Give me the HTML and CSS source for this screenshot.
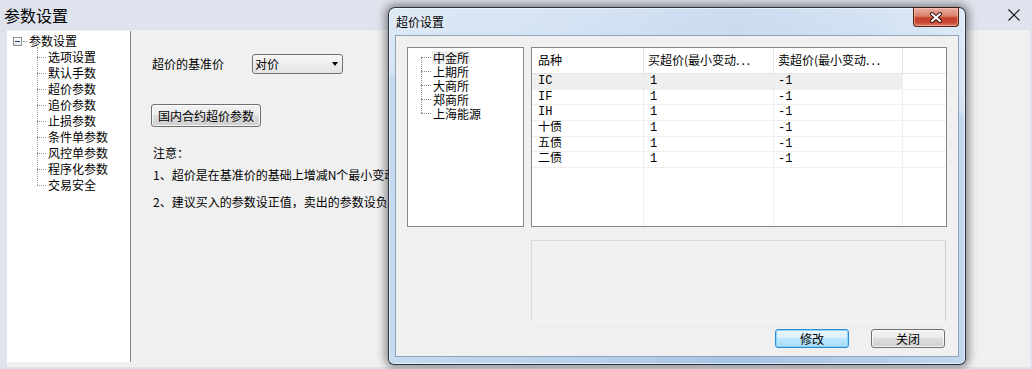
FILE: index.html
```html
<!DOCTYPE html>
<html lang="zh-CN">
<head>
<meta charset="utf-8">
<title>参数设置</title>
<link rel="stylesheet" href="styles.css">
</head>
<body>
<div class="window">
  <div class="titlebar">
    <span class="title">参数设置</span>
    <svg class="close-x" width="12" height="12" viewBox="0 0 12 12"><path d="M0.5 0.5L11.5 11.5M11.5 0.5L0.5 11.5" stroke="#111" stroke-width="1.1" fill="none"/></svg>
  </div>
  <div class="main">
    <div class="nav">
      <div class="root"><span class="expander"></span><span class="stub"></span><span class="root-label">参数设置</span></div>
      <ul class="children">
        <li>选项设置</li>
        <li>默认手数</li>
        <li>超价参数</li>
        <li>追价参数</li>
        <li>止损参数</li>
        <li>条件单参数</li>
        <li>风控单参数</li>
        <li>程序化参数</li>
        <li>交易安全</li>
      </ul>
    </div>
    <div class="content">
      <div class="field">
        <span class="label">超价的基准价</span>
        <div class="select"><span>对价</span><span class="arrow"></span></div>
      </div>
      <button class="btn" type="button">国内合约超价参数</button>
      <p class="note note-title">注意：</p>
      <p class="note note-1">1、超价是在基准价的基础上增减N个最小变动价位</p>
      <p class="note note-2">2、建议买入的参数设正值，卖出的参数设负值</p>
    </div>
  </div>

  <div class="dialog">
    <div class="dlg-titlebar">
      <span class="dlg-title">超价设置</span>
      <div class="dlg-close">
        <svg width="16" height="11" viewBox="0 0 16 11"><path d="M4 2L12 9M12 2L4 9" stroke="#3a1610" stroke-width="4" stroke-linecap="round" fill="none"/><path d="M4 2L12 9M12 2L4 9" stroke="#fff" stroke-width="2" stroke-linecap="round" fill="none"/></svg>
      </div>
    </div>
    <div class="client">
      <div class="top-row">
        <div class="exch">
          <ul>
            <li><span class="sel">中金所</span></li>
            <li><span>上期所</span></li>
            <li><span>大商所</span></li>
            <li><span>郑商所</span></li>
            <li><span>上海能源</span></li>
          </ul>
        </div>
        <div class="list">
          <div class="row head">
            <div class="cell">品种</div>
            <div class="cell">买超价(最小变动<span class="dots">...</span></div>
            <div class="cell">卖超价(最小变动<span class="dots">...</span></div>
            <div class="cell"></div>
          </div>
          <div class="row body selected">
            <div class="cell">IC</div><div class="cell">1</div><div class="cell">-1</div><div class="cell"></div>
          </div>
          <div class="row body">
            <div class="cell">IF</div><div class="cell">1</div><div class="cell">-1</div><div class="cell"></div>
          </div>
          <div class="row body">
            <div class="cell">IH</div><div class="cell">1</div><div class="cell">-1</div><div class="cell"></div>
          </div>
          <div class="row body">
            <div class="cell">十债</div><div class="cell">1</div><div class="cell">-1</div><div class="cell"></div>
          </div>
          <div class="row body">
            <div class="cell">五债</div><div class="cell">1</div><div class="cell">-1</div><div class="cell"></div>
          </div>
          <div class="row body">
            <div class="cell">二债</div><div class="cell">1</div><div class="cell">-1</div><div class="cell"></div>
          </div>
          <div class="row filler">
            <div class="cell"></div><div class="cell"></div><div class="cell"></div><div class="cell"></div>
          </div>
        </div>
      </div>
      <div class="panel"></div>
      <div class="actions">
        <button class="dbtn default" type="button">修改</button>
        <button class="dbtn" type="button">关闭</button>
      </div>
    </div>
  </div>
</div>
</body>
</html>
```
FILE: styles.css
```css
* { box-sizing: border-box; }
html, body { margin: 0; padding: 0; }
body {
  width: 1032px;
  height: 369px;
  overflow: hidden;
  background: #dfe3ed;
  font-family: "Noto Sans CJK SC", "Liberation Sans", sans-serif;
  font-size: 12px;
  color: #000;
}
.window {
  position: relative;
  width: 1032px;
  height: 369px;
  background: #dfe3ed;
}

/* main title bar */
.titlebar {
  height: 30px;
  display: flex;
  align-items: center;
  justify-content: space-between;
  padding: 0 12px 0 4px;
}
.title { font-size: 16px; line-height: 20px; }
.close-x { display: block; }

/* main body */
.main {
  display: flex;
  height: 337px;
  margin: 0 2px 0 7px;
  background: #f0f0f0;
}
.nav {
  flex: none;
  width: 124px;
  height: 331px;
  margin-top: 1px;
  background: #fff;
  border-right: 1px solid #828790;
  padding-top: 2px;
}
.root {
  display: flex;
  align-items: center;
  height: 16px;
  line-height: 16px;
}
.expander {
  position: relative;
  width: 9px;
  height: 9px;
  margin-left: 6px;
  border: 1px solid #8f8f8f;
  background: linear-gradient(#ffffff, #e6e6e6);
}
.expander::after {
  content: "";
  position: absolute;
  left: 1px;
  top: 3px;
  width: 5px;
  height: 1px;
  background: #23408e;
}
.stub {
  width: 4px;
  margin: 0 2px 0 1px;
  border-top: 1px dotted #9a9a9a;
}
.children {
  position: relative;
  list-style: none;
  margin: 0;
  padding: 0 0 0 41px;
}
.children::before {
  content: "";
  position: absolute;
  left: 30px;
  top: -2px;
  height: 138px;
  border-left: 1px dotted #9a9a9a;
}
.children li {
  position: relative;
  height: 16px;
  line-height: 16px;
}
.children li::before {
  content: "";
  position: absolute;
  left: -11px;
  top: 8px;
  width: 9px;
  border-top: 1px dotted #9a9a9a;
}

.content {
  flex: 1;
  min-width: 0;
  padding: 24px 0 0 20px;
  overflow: hidden;
  white-space: nowrap;
}
.field {
  display: flex;
  align-items: center;
  height: 20px;
  padding-left: 1px;
}
.label { width: 100px; line-height: 16px; }
.select {
  width: 91px;
  height: 20px;
  border: 1px solid #707070;
  border-radius: 3px;
  background: linear-gradient(#f7f7f7, #e3e3e3);
  display: flex;
  align-items: center;
  justify-content: space-between;
  padding: 0 4px 0 2px;
  line-height: 16px;
}
.arrow {
  width: 0;
  height: 0;
  border-left: 3.5px solid transparent;
  border-right: 3.5px solid transparent;
  border-top: 4px solid #000;
}
.btn {
  display: block;
  margin-top: 30px;
  width: 110px;
  height: 23px;
  padding: 0;
  border: 1px solid #707070;
  border-radius: 3px;
  background: linear-gradient(#f2f2f2 0%, #ebebeb 50%, #dddddd 50%, #cfcfcf 100%);
  box-shadow: inset 0 0 0 1px rgba(255,255,255,0.75);
  font: inherit;
  color: #000;
  line-height: 21px;
}
.note {
  margin: 0;
  padding-left: 2px;
  line-height: 16px;
}
.note-title { margin-top: 18px; }
.note-1 { margin-top: 6px; }
.note-2 { margin-top: 11px; }

/* dialog window (floating window on the desktop) */
.dialog {
  position: absolute;
  left: 388px;
  top: 7px;
  width: 578px;
  height: 358px;
  border: 1px solid rgba(24, 32, 48, 0.9);
  border-radius: 7px 7px 6px 6px;
  padding: 0 6px 7px 6px;
  display: flex;
  flex-direction: column;
  background:
    linear-gradient(184deg, rgba(255,255,255,0.45) 0%, rgba(255,255,255,0.3) 26%, rgba(255,255,255,0) 27.5%),
    linear-gradient(90deg, #c6daf0 0%, #b8d0eb 35%, #a7c4e5 60%, #b5ceea 85%, #c3d8ef 100%);
  box-shadow:
    inset 0 0 0 1px rgba(255,255,255,0.55),
    0 0 9px 3px rgba(0,0,0,0.42);
}
.dlg-titlebar {
  flex: none;
  height: 27px;
  display: flex;
  justify-content: space-between;
  align-items: flex-start;
}
.dlg-title {
  padding: 6px 0 0 1px;
  line-height: 15px;
  text-shadow: 0 0 6px rgba(255,255,255,0.9);
}
.dlg-close {
  width: 46px;
  height: 20px;
  margin-top: -1px;
  border: 1px solid #5b2117;
  border-top-color: #3a1a14;
  border-radius: 0 0 4px 4px;
  background: linear-gradient(#eab0a2 0%, #d9806c 45%, #c3402a 55%, #c84a33 80%, #dc7a62 100%);
  box-shadow: inset 0 0 0 1px rgba(255,220,210,0.45);
  display: flex;
  align-items: center;
  justify-content: center;
}
.dlg-close svg { display: block; }

.client {
  flex: 1;
  border: 1px solid #8fa3bd;
  background: #f0f0f0;
  padding: 11px 11px 0 11px;
}
.top-row {
  display: flex;
  gap: 7px;
  height: 180px;
}
.exch {
  flex: none;
  width: 117px;
  height: 180px;
  background: #fff;
  border: 1px solid #828790;
  padding-top: 2px;
}
.exch ul {
  position: relative;
  list-style: none;
  margin: 0;
  padding: 0 0 0 24px;
}
.exch ul::before {
  content: "";
  position: absolute;
  left: 13px;
  top: 7px;
  bottom: 7px;
  border-left: 1px dotted #8a8a8a;
}
.exch li {
  position: relative;
  height: 14px;
  display: flex;
  align-items: center;
}
.exch li::before {
  content: "";
  position: absolute;
  left: -11px;
  top: 7px;
  width: 10px;
  border-top: 1px dotted #8a8a8a;
}
.exch li span {
  display: block;
  height: 13px;
  line-height: 13px;
  padding: 0 1px;
  overflow: visible;
}
.exch li .sel { background: #ececec; }

.list {
  flex: none;
  width: 416px;
  height: 180px;
  border: 1px solid #828790;
  background: #fff;
  display: flex;
  flex-direction: column;
  overflow: hidden;
}
.row {
  display: grid;
  grid-template-columns: 112px 130px 129px 1fr;
  flex: none;
}
.cell {
  border-right: 1px solid #ededed;
  padding-left: 5px;
  white-space: nowrap;
  overflow: hidden;
}
.cell:first-child { padding-left: 6px; }
.row .cell:last-child { border-right: 0; }
.head {
  height: 26px;
  border-bottom: 1px solid #e3e3e3;
  align-items: center;
}
.head .cell {
  height: 25px;
  line-height: 24px;
  border-right-color: #e3e3e3;
  padding-left: 4px;
}
.head .cell:first-child { padding-left: 6px; }
.dots { letter-spacing: 2px; }
.body {
  height: 15.67px;
  border-bottom: 1px solid #efefef;
  font-family: "Liberation Mono", "Noto Sans CJK SC", monospace;
  font-size: 12px;
  line-height: 14.6px;
}
.body .cell { padding-left: 6px; }
.body .cell:nth-child(3) { padding-left: 4px; }
.selected .cell:nth-child(-n+3) { background: #efefef; }
.filler { flex: 1; }

.panel {
  width: 415px;
  height: 82px;
  margin: 13px 0 0 124px;
  border: 1px solid #d9d9d9;
  border-bottom-color: #f7f7f7;
  border-right-color: #cfcfcf;
}
.actions {
  display: flex;
  justify-content: flex-end;
  gap: 22px;
  margin-top: 7px;
  padding-right: 2px;
}
.dbtn {
  width: 74px;
  height: 19px;
  padding: 0;
  border: 1px solid #707070;
  border-radius: 3px;
  background: linear-gradient(#f2f2f2 0%, #ebebeb 50%, #dddddd 50%, #cfcfcf 100%);
  box-shadow: inset 0 0 0 1px rgba(255,255,255,0.75);
  font: inherit;
  color: #000;
  line-height: 17px;
}
.dbtn.default {
  border-color: #2e8bd3;
  background: linear-gradient(#eaf6fd 0%, #d9f0fc 50%, #bee6fd 50%, #a9dbf6 100%);
  box-shadow: inset 0 0 0 1px rgba(120,210,250,0.8);
}
```
